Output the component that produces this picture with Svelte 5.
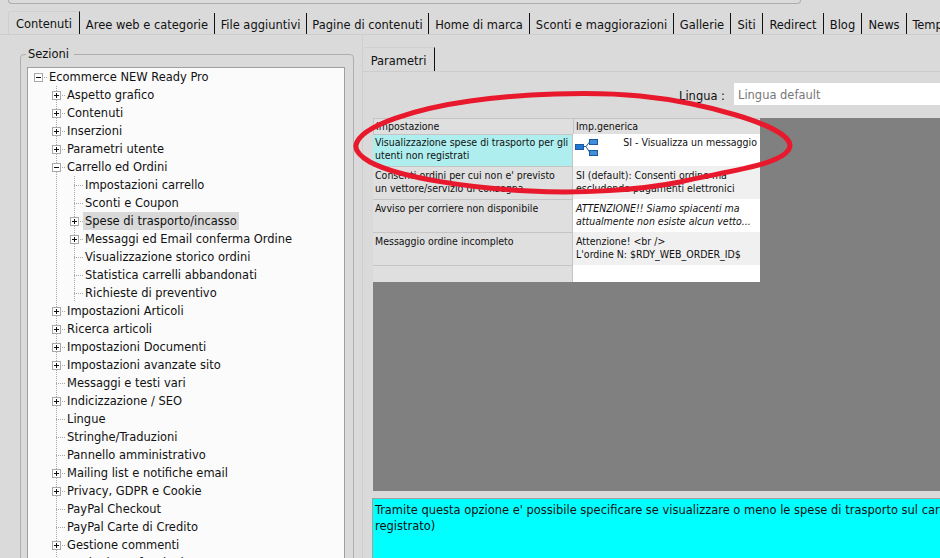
<script>
  const tabs = [
    { label: "Contenuti", width: 72, active: true },
    { label: "Aree web e categorie", width: 135 },
    { label: "File aggiuntivi", width: 92 },
    { label: "Pagine di contenuti", width: 122 },
    { label: "Home di marca", width: 101 },
    { label: "Sconti e maggiorazioni", width: 144 },
    { label: "Gallerie", width: 57 },
    { label: "Siti", width: 32 },
    { label: "Redirect", width: 61 },
    { label: "Blog", width: 38 },
    { label: "News", width: 45 },
    { label: "Templates", width: 70 }
  ];

  // depth 0 is the root, children of Carrello ed Ordini sit at depth 2
  const tree = [
    { label: "Ecommerce NEW Ready Pro", depth: 0, node: "minus" },
    { label: "Aspetto grafico", depth: 1, node: "plus" },
    { label: "Contenuti", depth: 1, node: "plus" },
    { label: "Inserzioni", depth: 1, node: "plus" },
    { label: "Parametri utente", depth: 1, node: "plus" },
    { label: "Carrello ed Ordini", depth: 1, node: "minus" },
    { label: "Impostazioni carrello", depth: 2, node: "leaf" },
    { label: "Sconti e Coupon", depth: 2, node: "leaf" },
    { label: "Spese di trasporto/incasso", depth: 2, node: "plus", selected: true },
    { label: "Messaggi ed Email conferma Ordine", depth: 2, node: "plus" },
    { label: "Visualizzazione storico ordini", depth: 2, node: "leaf" },
    { label: "Statistica carrelli abbandonati", depth: 2, node: "leaf" },
    { label: "Richieste di preventivo", depth: 2, node: "leaf" },
    { label: "Impostazioni Articoli", depth: 1, node: "plus" },
    { label: "Ricerca articoli", depth: 1, node: "plus" },
    { label: "Impostazioni Documenti", depth: 1, node: "plus" },
    { label: "Impostazioni avanzate sito", depth: 1, node: "plus" },
    { label: "Messaggi e testi vari", depth: 1, node: "leaf" },
    { label: "Indicizzazione / SEO", depth: 1, node: "plus" },
    { label: "Lingue", depth: 1, node: "leaf" },
    { label: "Stringhe/Traduzioni", depth: 1, node: "leaf" },
    { label: "Pannello amministrativo", depth: 1, node: "leaf" },
    { label: "Mailing list e notifiche email", depth: 1, node: "plus" },
    { label: "Privacy, GDPR e Cookie", depth: 1, node: "plus" },
    { label: "PayPal Checkout", depth: 1, node: "leaf" },
    { label: "PayPal Carte di Credito", depth: 1, node: "leaf" },
    { label: "Gestione commenti", depth: 1, node: "plus" },
    { label: "Marketing e funzioni", depth: 1, node: "plus" }
  ];

  const rows = [
    { name: ["Visualizzazione spese di trasporto per gli", "utenti non registrati"], value: ["SI - Visualizza un messaggio"], kind: "tree", current: true, h: 32 },
    { name: ["Consenti ordini per cui non e' previsto", "un vettore/servizio di consegna"], value: ["SI (default): Consenti ordine ma", "escludendo pagamenti  elettronici"], h: 33, alt: true },
    { name: ["Avviso per corriere non disponibile"], value: ["ATTENZIONE!! Siamo spiacenti ma", "attualmente non esiste alcun vetto..."], kind: "italic", h: 33 },
    { name: ["Messaggio ordine incompleto"], value: ["Attenzione! <br />", "L'ordine N: $RDY_WEB_ORDER_ID$"], h: 33, alt: true },
    { name: [], value: [], h: 17 }
  ];
</script>

<div class="page">
  <div class="topbox"></div>

  <nav class="tabs">
    {#each tabs as tab}
      <div class="tab" class:active={tab.active} style="width: {tab.width}px">{tab.label}</div>
    {/each}
  </nav>

  <div class="content">
    <fieldset class="sections">
      <legend>Sezioni</legend>
      <div class="tree">
        {#each tree as item}
          <div class="node">
            {#if item.depth === 2}
              <span class="cell"></span>
              <span class="cell line"></span>
            {:else if item.depth === 1}
              <span class="cell"></span>
            {/if}
            <span class="cell" class:branch={item.depth > 0} class:rootcell={item.depth === 0}>
              {#if item.node !== "leaf"}
                <span class="expander" class:open={item.node === "minus"}></span>
              {/if}
            </span>
            <span class="label" class:selected={item.selected}>{item.label}</span>
          </div>
        {/each}
      </div>
    </fieldset>

    <section class="params">
      <div class="subtabs"><div class="subtab">Parametri</div></div>

      <div class="lang">
        <span class="lang-label">Lingua :</span>
        <div class="lang-input">Lingua default</div>
      </div>

      <div class="grid-area">
        <div class="table">
          <div class="head">Impostazione</div>
          <div class="head second">Imp.generica</div>
          {#each rows as row}
            <div class="name" class:current={row.current} style="height: {row.h}px">
              {#each row.name as line}<div>{line}</div>{/each}
            </div>
            <div class="value" class:alt={row.alt} class:italic={row.kind === "italic"} class:withicon={row.kind === "tree"} style="height: {row.h}px">
              {#if row.kind === "tree"}
                <svg class="flow" width="23" height="17" viewBox="0 0 23 17">
                  <path d="M9 7.5H11M11 7.5L14.5 3M11 7.5L14.5 13" fill="none" stroke="#1f5f9f" stroke-width="1" />
                  <rect x="0.5" y="5.5" width="8" height="5" fill="#1f78d8" stroke="#1c5a9c" />
                  <rect x="14.5" y="0.5" width="8" height="5" fill="#3f8fdc" stroke="#1c5a9c" />
                  <rect x="14.5" y="11.5" width="8" height="5" fill="#3f8fdc" stroke="#1c5a9c" />
                </svg>
              {/if}
              <div class="value-text">
                {#each row.value as line}<div>{line}</div>{/each}
              </div>
            </div>
          {/each}
        </div>
      </div>

      <div class="help">
        Tramite questa opzione e' possibile specificare se visualizzare o meno le spese di trasporto sul carrello per gli utenti non<br />
        registrato)
      </div>
    </section>
  </div>

  <svg class="ring" width="940" height="558" viewBox="0 0 940 558">
    <path d="M356 145C360 125 420 108 470 101C520 94 590 91 640 96C700 102 788 125 790 145C790 165 720 172 680 182C640 190 580 194 530 191C470 188 400 178 370 162C360 156 355 150 356 145Z" fill="none" stroke="#e8192c" stroke-width="5" />
  </svg>
</div>

<style>
  :global(body) {
    background: #dadada;
    overflow: hidden;
  }

  .page {
    position: relative;
    width: 940px;
    height: 558px;
    overflow: hidden;
    font-family: "DejaVu Sans Condensed", "DejaVu Sans", sans-serif;
    font-size: 12.75px;
    color: #111;
    background: #dadada;
  }

  .topbox {
    height: 3px;
    margin: 0 139px 0 8px;
    border: 1px solid #aeaeae;
    border-top: none;
    border-radius: 0 0 4px 4px;
  }

  .tabs {
    display: flex;
    height: 21px;
    margin-top: 9px;
    padding-left: 8px;
    white-space: nowrap;
  }

  .tab {
    flex: none;
    height: 21px;
    line-height: 24px;
    text-align: center;
    border-right: 1px solid #111;
    box-sizing: border-box;
    overflow: hidden;
  }

  .tab.active {
    border-radius: 3px 0 0 0;
    border-top: 1px solid #cfcfcf;
    border-left: 1px solid #cfcfcf;
    height: 23px;
    margin-top: -2px;
    line-height: 24px;
  }

  .content {
    display: flex;
    align-items: flex-start;
    border-top: 1px solid #cdcdcd;
    padding-left: 20px;
  }

  .sections {
    flex: none;
    width: 334px;
    height: 530px;
    box-sizing: border-box;
    margin: 11px 0 0;
    padding: 5px 8px 0 6px;
    border: 1px solid #aeaeae;
    border-radius: 4px;
  }

  legend {
    margin-left: -1px;
    padding: 0 5px 0 2px;
    line-height: 16px;
  }

  .tree {
    width: 318px;
    height: 500px;
    box-sizing: border-box;
    padding-left: 1px;
    border: 1px solid #a0a0a0;
    background: #fbfbfb;
    overflow: hidden;
  }

  .node {
    display: flex;
    align-items: center;
    height: 18px;
    white-space: nowrap;
  }

  .cell {
    display: flex;
    align-items: center;
    flex: none;
    width: 18px;
    height: 18px;
    box-sizing: border-box;
    padding-left: 5px;
  }

  .cell.line {
    background: repeating-linear-gradient(to bottom, #a8a8a8 0 1px, transparent 1px 2px) 9px 0 / 1px 100% no-repeat;
  }

  .cell.branch {
    background:
      repeating-linear-gradient(to bottom, #a8a8a8 0 1px, transparent 1px 2px) 9px 0 / 1px 100% no-repeat,
      repeating-linear-gradient(to right, #a8a8a8 0 1px, transparent 1px 2px) 9px 9px / 9px 1px no-repeat;
  }

  .cell.rootcell {
    background: repeating-linear-gradient(to right, #a8a8a8 0 1px, transparent 1px 2px) 9px 9px / 9px 1px no-repeat;
  }

  .expander {
    flex: none;
    width: 9px;
    height: 9px;
    box-sizing: border-box;
    border: 1px solid #a8a8a8;
    background:
      linear-gradient(#111, #111) center / 5px 1px no-repeat,
      linear-gradient(#111, #111) center / 1px 5px no-repeat,
      #fff;
  }

  .expander.open {
    background:
      linear-gradient(#111, #111) center / 5px 1px no-repeat,
      #fff;
  }

  .label {
    height: 18px;
    margin-left: 2px;
    padding-right: 2px;
    line-height: 18px;
  }

  .label.selected {
    margin-left: 0;
    padding: 0 2px;
    background: #d9d9d9;
  }

  .params {
    flex: 1;
    min-width: 0;
    margin-left: 8px;
    margin-top: -1px;
    height: 530px;
    border-left: 1px solid #cfcfcf;
  }

  .subtabs {
    height: 24px;
    margin-top: 13px;
    border-bottom: 1px solid #cdcdcd;
    margin-right: -250px;
  }

  .subtab {
    width: 72px;
    height: 24px;
    box-sizing: border-box;
    line-height: 25px;
    text-align: center;
    border-top: 1px solid #cfcfcf;
    border-right: 1px solid #111;
    border-radius: 3px 0 0 0;
  }

  .lang {
    display: flex;
    justify-content: flex-end;
    align-items: center;
    height: 22px;
    margin-top: 11px;
    gap: 9px;
    margin-right: -220px;
  }

  .lang-label {
    padding-top: 3px;
  }

  .lang-input {
    width: 426px;
    height: 22px;
    line-height: 23px;
    padding-left: 4px;
    box-sizing: border-box;
    background: #fff;
    color: #777;
  }

  .grid-area {
    height: 373px;
    margin: 13px -240px 0 10px;
    background: #808080;
  }

  .table {
    display: grid;
    grid-template-columns: 200px 187px;
    width: 387px;
    font-size: 10.5px;
    line-height: 13px;
    white-space: nowrap;
    background: #dfdfdf;
  }

  .head {
    height: 16px;
    box-sizing: border-box;
    padding: 1px 2px 0;
    background: #dfdfdf;
    border-top: 1px solid #c4c4c4;
    border-left: 1px solid #c4c4c4;
  }

  .head.second {
    padding-left: 2px;
  }

  .name {
    box-sizing: border-box;
    padding: 2px 2px 0;
    overflow: hidden;
    background: #dfdfdf;
    border-top: 1px solid #c4c4c4;
    border-right: 1px solid #c4c4c4;
  }

  .name.current {
    padding-top: 1px;
    background: #aeeeee;
  }

  .value {
    box-sizing: border-box;
    padding: 3px 3px 0;
    background: #fff;
  }

  .value.alt {
    background: #f0f0f0;
  }

  .value.italic {
    font-style: italic;
  }

  .value.withicon {
    display: flex;
    justify-content: space-between;
    padding-top: 2px;
  }

  .flow {
    flex: none;
    margin: 3px 0 0 -1px;
  }

  .help {
    height: 80px;
    margin: 7px -240px 0 9px;
    padding: 3px 2px;
    background: #00ffff;
    border: 1px solid #a0a0a0;
    line-height: 16px;
    white-space: nowrap;
  }

  .ring {
    position: absolute;
    left: 0;
    top: 0;
    pointer-events: none;
  }
</style>
